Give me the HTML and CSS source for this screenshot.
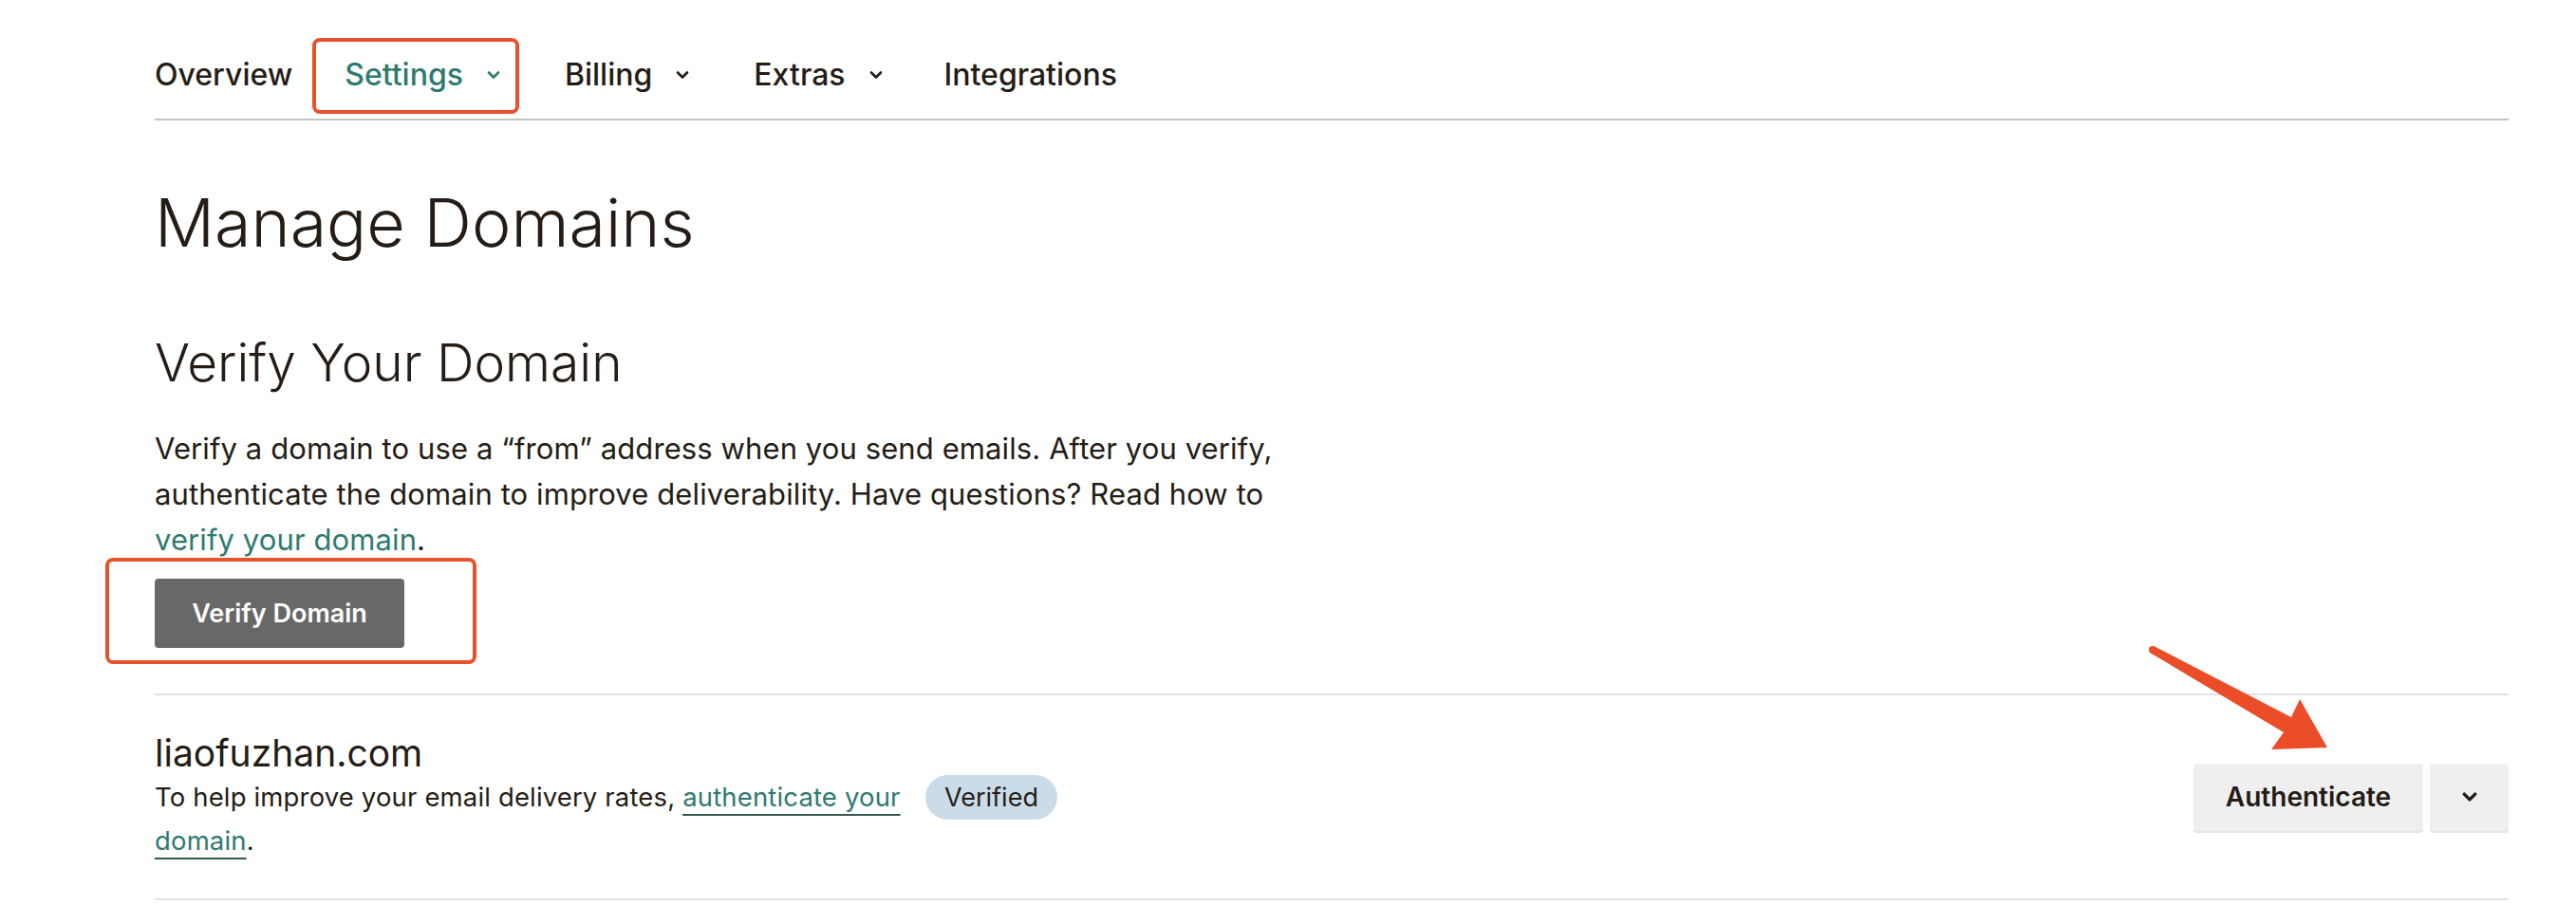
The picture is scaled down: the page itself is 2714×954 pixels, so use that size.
FILE: index.html
```html
<!DOCTYPE html>
<html lang="en">
<head>
<meta charset="utf-8">
<title>Manage Domains</title>
<link rel="stylesheet" href="styles.css">
</head>
<body>
<div class="page">
  <nav class="tabs">
    <a class="tab tab-first">Overview</a>
    <a class="tab tab-active">Settings
      <svg class="chev" viewBox="0 0 14 10" aria-hidden="true"><path d="M2 2.5 L7 7.5 L12 2.5" /></svg>
    </a>
    <a class="tab">Billing
      <svg class="chev" viewBox="0 0 14 10" aria-hidden="true"><path d="M2 2.5 L7 7.5 L12 2.5" /></svg>
    </a>
    <a class="tab tab-extras">Extras
      <svg class="chev" viewBox="0 0 14 10" aria-hidden="true"><path d="M2 2.5 L7 7.5 L12 2.5" /></svg>
    </a>
    <a class="tab">Integrations</a>
  </nav>

  <h1 class="title">Manage Domains</h1>

  <section class="verify">
    <h2 class="subtitle">Verify Your Domain</h2>
    <p class="lead">Verify a domain to use a “from” address when you send emails. After you verify, authenticate the domain to improve deliverability. Have questions? Read how to <a class="link">verify your domain</a>.</p>
    <div class="verify-action">
      <button class="btn-verify" type="button">Verify Domain</button>
    </div>
  </section>

  <div class="domain-row">
    <div class="domain-info">
      <div class="domain-name">liaofuzhan.com</div>
      <div class="domain-meta">
        <p class="domain-desc">To help improve your email delivery rates, <a class="link">authenticate your domain</a>.</p>
        <span class="badge">Verified</span>
      </div>
    </div>
    <div class="actions">
      <button class="btn-light btn-auth" type="button">Authenticate</button>
      <button class="btn-light btn-more" type="button" aria-label="More">
        <svg class="chev-dark" viewBox="0 0 14 10" aria-hidden="true"><path d="M2 2.5 L7 7.5 L12 2.5" /></svg>
      </button>
    </div>
  </div>
</div>

<svg class="arrow" viewBox="0 0 220 140" aria-hidden="true">
  <path d="M20 11.5 L164 86 L173 67 L202 118 L143 120 L156 102 L16 18.5 Z" />
  <circle cx="18" cy="15" r="4" />
</svg>
</body>
</html>
```

FILE: styles.css
```css
* { box-sizing: border-box; }

html, body {
  margin: 0;
  padding: 0;
  background: #ffffff;
}

body {
  font-family: Inter, "Liberation Sans", Arial, sans-serif;
  color: #241c15;
  width: 2714px;
  height: 954px;
  overflow: hidden;
  position: relative;
}

.page {
  padding: 0 71px 0 163px;
}

/* ---------- tabs ---------- */
.tabs {
  display: flex;
  align-items: center;
  height: 127px;
  padding-top: 32px;
  border-bottom: 2px solid #c4c4c4;
}

.tab {
  position: relative;
  display: flex;
  align-items: center;
  gap: 25px;
  font-size: 32px;
  font-weight: 500;
  color: #241c15;
  margin-right: 68px;
  text-decoration: none;
}

.tab-first {
  margin-right: 55px;
}

.tab-extras {
  margin-right: 65px;
}

.tab-active {
  color: #2f7a6e;
}

.tab-active::after {
  content: "";
  position: absolute;
  left: -34px;
  right: -20px;
  top: -19px;
  bottom: -22px;
  border: 4px solid #e8512c;
  border-radius: 8px;
}

.chev {
  width: 14px;
  height: 10px;
  fill: none;
  stroke: currentColor;
  stroke-width: 2.6;
  stroke-linecap: round;
  stroke-linejoin: round;
}

/* ---------- headings ---------- */
.title {
  margin: 66px 0 0;
  font-size: 70px;
  font-weight: 300;
  line-height: 1.2;
}

.verify {
  margin-top: 72px;
}

.subtitle {
  margin: 0;
  font-size: 55px;
  font-weight: 300;
  line-height: 1.2;
}

.lead {
  margin: 34px 0 0;
  width: 1260px;
  font-size: 31px;
  letter-spacing: 0.1px;
  line-height: 48px;
  font-weight: 400;
}

.link {
  color: #2f7a6e;
  text-decoration: underline;
  text-decoration-color: #34584f;
  text-decoration-thickness: 2px;
  text-underline-offset: 8px;
}

.verify-action {
  position: relative;
  display: inline-block;
  margin-top: 17px;
}

.verify-action::after {
  content: "";
  position: absolute;
  left: -52px;
  right: -76px;
  top: -22px;
  bottom: -17px;
  border: 4px solid #e8512c;
  border-radius: 8px;
}

.btn-verify {
  display: block;
  width: 263px;
  height: 73px;
  border: 0;
  border-radius: 4px;
  background: #686868;
  color: #ffffff;
  font-family: inherit;
  font-size: 27px;
  font-weight: 600;
}

/* ---------- domain row ---------- */
.domain-row {
  margin-top: 48px;
  display: flex;
  align-items: center;
  justify-content: space-between;
  height: 218px;
  border-top: 2px solid #e3e3e3;
  border-bottom: 2px solid #e3e3e3;
}

.domain-name {
  font-size: 39px;
  font-weight: 400;
  line-height: 1.2;
}

.domain-meta {
  display: flex;
  align-items: flex-start;
  gap: 12px;
}

.domain-desc {
  margin: 0;
  width: 800px;
  font-size: 27.5px;
  letter-spacing: 0.15px;
  line-height: 46px;
}

.badge {
  display: inline-flex;
  align-items: center;
  height: 47px;
  padding: 0 20px;
  border-radius: 24px;
  background: #cadcea;
  color: #241c15;
  font-size: 27px;
}

.actions {
  display: flex;
  gap: 7px;
}

.btn-light {
  height: 71px;
  border: 0;
  border-radius: 4px;
  background: #efefef;
  color: #241c15;
  font-family: inherit;
  box-shadow: 0 2px 0 #e4e4e4;
}

.btn-auth {
  width: 242px;
  font-size: 28px;
  font-weight: 600;
}

.btn-more {
  width: 83px;
  display: flex;
  align-items: center;
  justify-content: center;
}

.chev-dark {
  width: 16px;
  height: 12px;
  fill: none;
  stroke: #241c15;
  stroke-width: 3;
  stroke-linecap: round;
  stroke-linejoin: round;
}

/* ---------- annotation arrow ---------- */
.arrow {
  position: absolute;
  left: 2250px;
  top: 670px;
  width: 220px;
  height: 140px;
  fill: #ea4d27;
}
```
